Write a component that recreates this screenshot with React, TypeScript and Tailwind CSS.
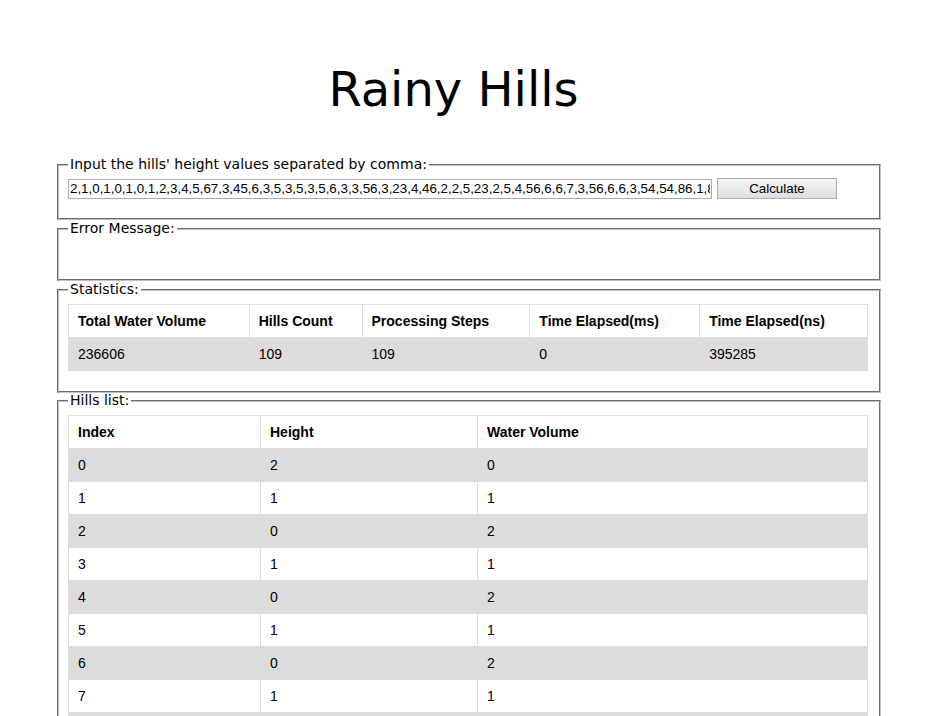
import React from "react";

const heights = [2,1,0,1,0,1,0,1,2,3,4,5,67,3,45,6,3,5,3,5,3,5,6,3,3,56,3,23,4,46,2,2,5,23,2,5,4,56,6,6,7,3,56,6,6,3,54,54,86,1,8];
const water = [0,1,2,1,2,1,2,1,0,0];

const inputValue =
  "2,1,0,1,0,1,0,1,2,3,4,5,67,3,45,6,3,5,3,5,3,5,6,3,3,56,3,23,4,46,2,2,5,23,2,5,4,56,6,6,7,3,56,6,6,3,54,54,86,1,86,3,5,2,45,6,7,3,2,5,6,7";

const Legend = ({ children }: { children: React.ReactNode }) => (
  <legend className="px-[2px] text-[14px] leading-[17px] text-black [font-family:'DejaVu_Sans',Verdana,sans-serif]">
    {children}
  </legend>
);

const fs = "border-2 [border-style:groove] border-[#c0c0c0] w-[824px] px-[9px]";

export default function App() {
  const rows = Array.from({ length: 10 }, (_, i) => ({ i, h: heights[i], w: water[i] ?? 0 }));
  return (
    <div className="h-[716px] w-[927px] overflow-hidden bg-white [font-family:'Liberation_Sans',Arial,sans-serif] text-black">
      <div className="w-[907px] pt-[61px] text-center">
        <h1 className="text-[48px] leading-[56px] [font-family:'DejaVu_Sans',Verdana,sans-serif] text-black">Rainy Hills</h1>
      </div>
      <div className="ml-[57px] mt-[39px] flex flex-col">
        <fieldset className={`${fs} pb-[19px] pt-[5px]`}>
          <Legend>Input the hills' height values separated by comma:</Legend>
          <div className="flex items-center gap-[5px]">
            <input
              readOnly
              value={inputValue}
              className="h-[20px] w-[644px] border border-[#a9a9a9] px-[1px] text-[13.333px] leading-[18px] text-black outline-none [font-family:'Liberation_Sans',Arial,sans-serif]"
            />
            <button className="h-[21px] w-[120px] border border-[#adadad] bg-gradient-to-b from-[#f6f6f6] to-[#dedede] text-[13.333px] leading-[19px] text-black [font-family:'Liberation_Sans',Arial,sans-serif]">
              Calculate
            </button>
          </div>
        </fieldset>
        <fieldset className={`${fs} h-[61px]`}>
          <Legend>Error Message:</Legend>
        </fieldset>
        <fieldset className={`${fs} pb-[20px] pt-[6px]`}>
          <Legend>Statistics:</Legend>
          <table className="w-[800px] border-collapse text-[14px]">
            <thead>
              <tr className="h-[33px]">
                {[
                  ["Total Water Volume", "w-[181px]"],
                  ["Hills Count", "w-[113px]"],
                  ["Processing Steps", "w-[168px]"],
                  ["Time Elapsed(ms)", "w-[170px]"],
                  ["Time Elapsed(ns)", "w-[168px]"],
                ].map(([t, w]) => (
                  <th key={t} className={`${w} border border-[#dddddd] px-[9px] text-left font-bold`}>
                    {t}
                  </th>
                ))}
              </tr>
            </thead>
            <tbody>
              <tr className="h-[33px] bg-[#dcdcdc]">
                {["236606", "109", "109", "0", "395285"].map((v, k) => (
                  <td key={k} className="border border-[#dddddd] px-[9px]">
                    {v}
                  </td>
                ))}
              </tr>
            </tbody>
          </table>
        </fieldset>
        <fieldset className={`${fs} -mt-[1px] pb-[19px] pt-[6px]`}>
          <Legend>Hills list:</Legend>
          <table className="w-[800px] border-collapse text-[14px]">
            <thead>
              <tr className="h-[33px]">
                <th className="w-[192px] border border-[#dddddd] px-[9px] text-left font-bold">Index</th>
                <th className="w-[217px] border border-[#dddddd] px-[9px] text-left font-bold">Height</th>
                <th className="border border-[#dddddd] px-[9px] text-left font-bold">Water Volume</th>
              </tr>
            </thead>
            <tbody>
              {rows.map((r) => (
                <tr key={r.i} className={`h-[33px] ${r.i % 2 === 0 ? "bg-[#dcdcdc]" : "bg-white"}`}>
                  <td className="border border-[#dddddd] px-[9px]">{r.i}</td>
                  <td className="border border-[#dddddd] px-[9px]">{r.h}</td>
                  <td className="border border-[#dddddd] px-[9px]">{r.w}</td>
                </tr>
              ))}
            </tbody>
          </table>
        </fieldset>
      </div>
    </div>
  );
}
